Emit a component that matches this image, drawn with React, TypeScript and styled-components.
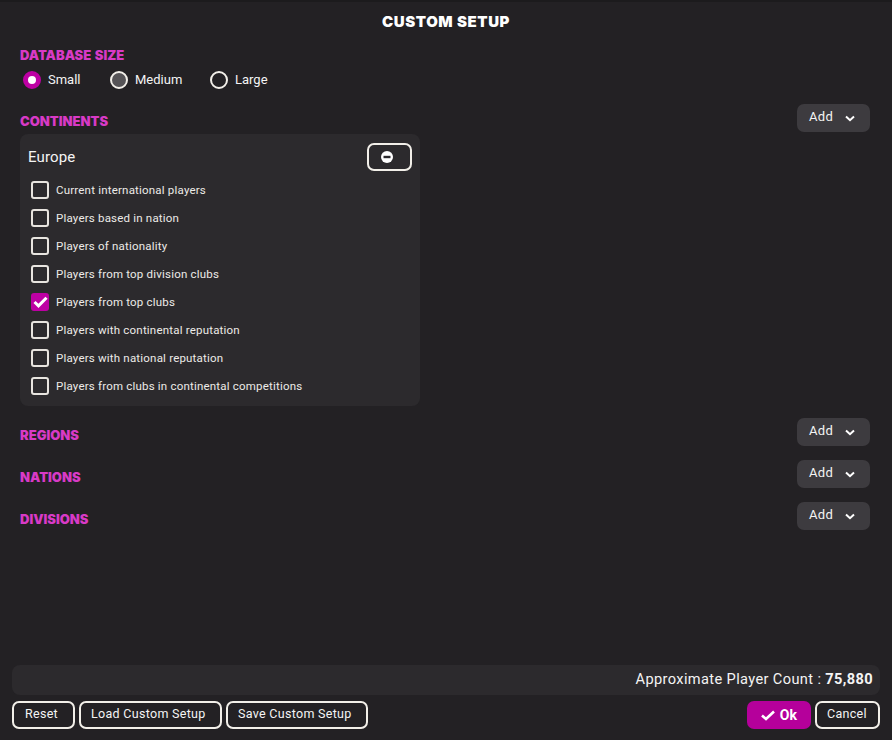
import * as React from 'react';
import styled, { createGlobalStyle } from 'styled-components';

const GlobalStyle = createGlobalStyle`
  html, body {
    margin: 0;
    padding: 0;
    background: #1c1b1d;
  }
  * {
    box-sizing: border-box;
  }
`;

const options = [
  { label: 'Current international players', checked: false },
  { label: 'Players based in nation', checked: false },
  { label: 'Players of nationality', checked: false },
  { label: 'Players from top division clubs', checked: false },
  { label: 'Players from top clubs', checked: true },
  { label: 'Players with continental reputation', checked: false },
  { label: 'Players with national reputation', checked: false },
  { label: 'Players from clubs in continental competitions', checked: false },
];

const sizes = [
  { label: 'Small', state: 'on', width: 87 },
  { label: 'Medium', state: 'hover', width: 100 },
  { label: 'Large', state: 'off', width: 70 },
] as const;

const AddButton: React.FC = () => (
  <Add>
    Add
    <svg width="10" height="7" viewBox="0 0 10 7">
      <path d="M1 1.5 L5 5.2 L9 1.5" fill="none" stroke="#fff" strokeWidth="2" />
    </svg>
  </Add>
);

const App: React.FC = () => {
  return (
    <Page>
      <GlobalStyle />
      <Title>CUSTOM SETUP</Title>
      <Body>
        <Heading>DATABASE SIZE</Heading>
        <RadioRow>
          {sizes.map(s => (
            <RadioItem key={s.label} $width={s.width}>
              <Radio $state={s.state} />
              {s.label}
            </RadioItem>
          ))}
        </RadioRow>
        <SectionRow $top={15}>
          <Heading>CONTINENTS</Heading>
          <AddButton />
        </SectionRow>
        <Card>
          <CardHead>
            <CardTitle>Europe</CardTitle>
            <RemoveButton>
              <svg width="12" height="12" viewBox="0 0 12 12">
                <circle cx="6" cy="6" r="6" fill="#fff" />
                <rect x="2.5" y="4.8" width="7" height="2.4" fill="#2c2a2e" />
              </svg>
            </RemoveButton>
          </CardHead>
          <CheckList>
            {options.map(o => (
              <CheckRow key={o.label}>
                <CheckBox $checked={o.checked}>
                  {o.checked && (
                    <svg width="15" height="12" viewBox="0 0 15 12">
                      <path d="M1.5 6 L5.5 9.8 L13.5 1.8" fill="none" stroke="#fff" strokeWidth="3" />
                    </svg>
                  )}
                </CheckBox>
                {o.label}
              </CheckRow>
            ))}
          </CheckList>
        </Card>
        <SectionRow $top={12}>
          <Heading>REGIONS</Heading>
          <AddButton />
        </SectionRow>
        <SectionRow $top={14}>
          <Heading>NATIONS</Heading>
          <AddButton />
        </SectionRow>
        <SectionRow $top={14}>
          <Heading>DIVISIONS</Heading>
          <AddButton />
        </SectionRow>
      </Body>
      <CountBar>
        Approximate Player Count :&nbsp;<strong>75,880</strong>
      </CountBar>
      <Footer>
        <FooterGroup>
          <OutlineButton $width={63} $inset={11}>Reset</OutlineButton>
          <OutlineButton $width={143}>Load Custom Setup</OutlineButton>
          <OutlineButton $width={142}>Save Custom Setup</OutlineButton>
        </FooterGroup>
        <FooterGroup>
          <OkButton>
            <svg width="14" height="11" viewBox="0 0 14 11">
              <path d="M1 5.5 L5 9 L13 1.5" fill="none" stroke="#fff" strokeWidth="2.6" />
            </svg>
            Ok
          </OkButton>
          <OutlineButton $width={65}>Cancel</OutlineButton>
        </FooterGroup>
      </Footer>
    </Page>
  );
};

const Page = styled.div`
  width: 892px;
  height: 740px;
  padding-top: 2px;
  display: flex;
  flex-direction: column;
  background: #232124;
  border-top: 2px solid #1c1b1d;
  color: #f4f4f4;
  font-family: Roboto, 'Liberation Sans', sans-serif;
  overflow: hidden;
`;

const Title = styled.div`
  height: 30px;
  padding-top: 8px;
  text-align: center;
  font-family: Inter, 'Liberation Sans', sans-serif;
  font-size: 15px;
  line-height: 20px;
  font-weight: 900;
  letter-spacing: 0.6px;
  color: #fff;
`;

const Body = styled.div`
  flex: 1;
  padding: 12px 22px 0 20px;
`;

const Heading = styled.div`
  font-family: Inter, 'Liberation Sans', sans-serif;
  font-size: 13px;
  line-height: 18px;
  font-weight: 900;
  word-spacing: 1px;
  color: #d83ac6;
`;

const RadioRow = styled.div`
  display: flex;
  margin-top: 7px;
  padding-left: 3px;
`;

const RadioItem = styled.div<{ $width: number }>`
  width: ${p => p.$width}px;
  display: flex;
  align-items: center;
  gap: 7px;
  font-size: 13px;
  line-height: 18px;
`;

const radioBackground = { on: '#fff', hover: '#565457', off: 'transparent' };
const radioBorder = { on: '#bd00a3', hover: '#f2efe9', off: '#f2efe9' };

const Radio = styled.span<{ $state: 'on' | 'hover' | 'off' }>`
  width: 18px;
  height: 18px;
  flex: none;
  border-radius: 50%;
  background: ${p => radioBackground[p.$state]};
  border: ${p => (p.$state === 'on' ? '5px' : '2px')} solid ${p => radioBorder[p.$state]};
`;

const SectionRow = styled.div<{ $top: number }>`
  display: flex;
  justify-content: space-between;
  align-items: center;
  height: 28px;
  margin-top: ${p => p.$top}px;

  ${Heading} {
    padding-top: 6px;
  }
`;

const Add = styled.div`
  width: 73px;
  height: 28px;
  padding: 0 15px 4px 12px;
  display: flex;
  align-items: center;
  justify-content: space-between;
  border-radius: 7px;
  background: #3d3b3f;
  font-size: 13px;
  letter-spacing: 0.3px;

  svg {
    margin-top: 4px;
  }
`;

const Card = styled.div`
  width: 400px;
  height: 272px;
  margin-top: 2px;
  padding: 9px 8px 0;
  border-radius: 8px;
  background: #2c2a2d;
`;

const CardHead = styled.div`
  display: flex;
  justify-content: space-between;
  align-items: center;
  height: 28px;
`;

const CardTitle = styled.div`
  font-size: 15px;
  letter-spacing: 0.15px;
`;

const RemoveButton = styled.div`
  width: 45px;
  height: 28px;
  padding-left: 12px;
  display: flex;
  align-items: center;
  border: 2px solid #f2efe9;
  border-radius: 7px;
`;

const CheckList = styled.div`
  margin-top: 5px;
  padding-left: 3px;
`;

const CheckRow = styled.div`
  height: 28px;
  display: flex;
  align-items: center;
  gap: 7px;
  font-size: 11.5px;
  letter-spacing: 0.2px;
  color: #ecebe8;
`;

const CheckBox = styled.span<{ $checked: boolean }>`
  width: 18px;
  height: 18px;
  flex: none;
  display: flex;
  align-items: center;
  justify-content: center;
  border-radius: 3px;
  background: ${p => (p.$checked ? '#bd00a3' : 'transparent')};
  border: ${p => (p.$checked ? 'none' : '2px solid #e8e4df')};
`;

const CountBar = styled.div`
  height: 30px;
  margin: 0 12px;
  padding: 0 7px 2px 0;
  display: flex;
  align-items: center;
  justify-content: flex-end;
  border-radius: 8px;
  background: #2c2a2d;
  font-size: 14.6px;
  letter-spacing: 0.37px;

  strong {
    font-weight: 700;
  }
`;

const Footer = styled.div`
  height: 45px;
  padding: 6px 12px 11px;
  display: flex;
  justify-content: space-between;
`;

const FooterGroup = styled.div`
  display: flex;
  gap: 4px;
`;

const OutlineButton = styled.div<{ $width: number; $inset?: number }>`
  width: ${p => p.$width}px;
  height: 28px;
  padding: 0 0 3px ${p => p.$inset ?? 10}px;
  display: flex;
  align-items: center;
  border: 2px solid #f2efe9;
  border-radius: 7px;
  font-size: 12.5px;
  letter-spacing: 0.3px;
`;

const OkButton = styled.div`
  width: 64px;
  height: 28px;
  display: flex;
  align-items: center;
  justify-content: center;
  gap: 5px;
  border-radius: 7px;
  background: #b5009b;
  font-size: 14px;
  font-weight: 700;
  letter-spacing: 0.3px;
  color: #fff;
`;

export default App;
